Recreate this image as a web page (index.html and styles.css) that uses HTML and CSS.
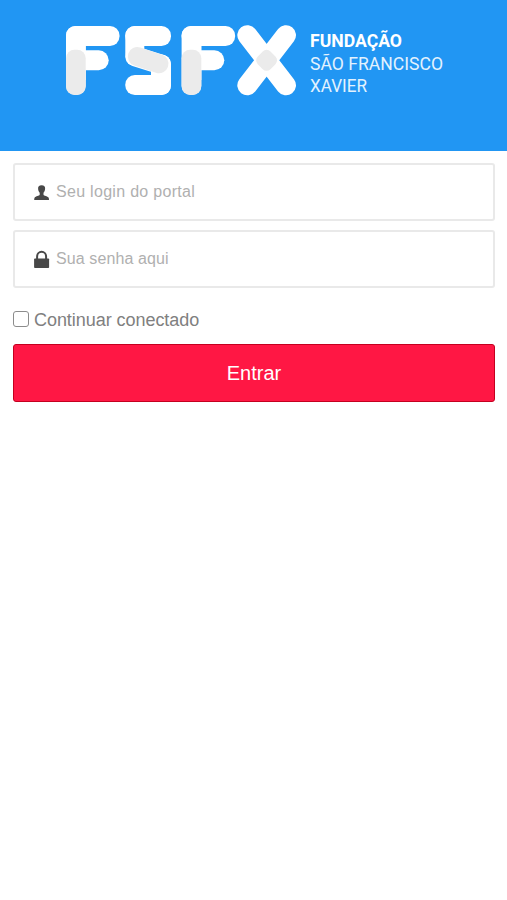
FILE: index.html
```
<!DOCTYPE html>
<html lang="pt-BR">
<head>
    <meta charset="UTF-8">
    <meta name="viewport" content="width=device-width, initial-scale=1.0">
    <title>Portal FSFX</title>
    <link rel="stylesheet" href="styles.css">
</head>
<body>
    <header class="header">
        <svg class="logo" width="380" height="72" viewBox="65 24 380 72" role="img" aria-label="FSFX">
            <!-- F -->
            <g id="logo-f">
                <rect class="bar" x="66" y="26" width="53.5" height="20" rx="9.5"/>
                <rect class="bar" x="66" y="26" width="19.7" height="69" rx="9.5"/>
                <rect class="bar" x="70" y="50.3" width="38.7" height="20" rx="10"/>
                <rect class="bar" x="78" y="40" width="7.700" height="40"/>
                <rect class="overlap" x="66" y="49.7" width="19.700" height="45.300" rx="8.500"/>
            </g>
            <!-- S -->
            <rect class="bar" x="125.300" y="26" width="45.700" height="20" rx="9.500"/>
            <rect class="bar" x="125.300" y="26" width="19" height="40" rx="9.500"/>
            <rect class="bar" x="151" y="54.500" width="20" height="40.500" rx="9.500"/>
            <rect class="bar" x="125.300" y="75" width="45.700" height="20" rx="9.500"/>
            <line class="diagonal" x1="135.500" y1="56.500" x2="161" y2="64.500"/>
            <line class="diagonal-gray" x1="137.300" y1="56.500" x2="159" y2="63.800"/>
            <!-- F -->
            <use href="#logo-f" x="115.600"/>
            <!-- X -->
            <line class="diagonal" x1="247.300" y1="35.200" x2="286" y2="85.300"/>
            <line class="diagonal" x1="286" y1="35.200" x2="247.300" y2="85.300"/>
            <rect class="overlap" x="-9" y="-9" width="18" height="18" rx="5.500" transform="translate(266.600 60.300) rotate(45)"/>
            <text class="name bold" x="310" y="47.300" textLength="92" lengthAdjust="spacingAndGlyphs">FUNDAÇÃO</text>
            <text class="name" x="310" y="69.600" textLength="133" lengthAdjust="spacingAndGlyphs">SÃO FRANCISCO</text>
            <text class="name" x="310" y="92" textLength="57" lengthAdjust="spacingAndGlyphs">XAVIER</text>
        </svg>
    </header>

    <form class="login">
        <div class="field">
            <svg class="icon" width="16" height="18" viewBox="0 0 16 18">
                <path d="M7.600 2.200C5 2.200 3.900 3.600 4.100 5.800c.1 1.800.7 3.100 1.600 4v2c-.5 1.100-3.900 1.300-5 2.800-.4.600-.5 1.500-.5 2.400h14.800c0-.9-.1-1.800-.5-2.400-1.100-1.500-4.500-1.700-5-2.800v-2c.9-.9 1.500-2.200 1.600-4 .2-2.200-.9-3.600-3.500-3.600z"/>
            </svg>
            <input class="user" type="text" id="login" placeholder="Seu login do portal">
        </div>
        <div class="field">
            <svg class="icon" width="16" height="18" viewBox="0 0 16 18">
                <path class="shackle" d="M3.100 9.500V6.700a4.500 4.900 0 0 1 9 0v2.800"/>
                <rect x=".1" y="8.400" width="15" height="9.600" rx=".8"/>
            </svg>
            <input type="password" id="senha" placeholder="Sua senha aqui">
        </div>
        <label class="remember">
            <input type="checkbox" id="conectado">
            <span>Continuar conectado</span>
        </label>
        <button type="submit" class="btn">Entrar</button>
    </form>
</body>
</html>
```
FILE: styles.css
```
* {
    box-sizing: border-box;
}

body {
    font-family: "Liberation Sans", Arial, sans-serif;
    background-color: #fff;
    margin: 0;
}

.header {
    height: 151px;
    padding: 24px 0 0 65px;
    background-color: #2196f3;
}

.logo {
    display: block;
}

.bar {
    fill: #fff;
}

.overlap {
    fill: #ebebeb;
}

.diagonal,
.diagonal-gray {
    stroke: #fff;
    stroke-width: 20px;
    stroke-linecap: round;
}

.diagonal-gray {
    stroke: #ebebeb;
    stroke-width: 19px;
}

.name {
    font-family: Roboto, sans-serif;
    font-size: 18px;
    fill: #e3f2fe;
}

.name.bold {
    font-weight: bold;
    fill: #fff;
}

.login {
    padding: 12px 12px 0 13px;
}

.field {
    display: flex;
    align-items: center;
    height: 58px;
    margin-bottom: 9px;
    padding-left: 19px;
    border: 2px solid #e9e9e9;
    border-radius: 3px;
}

.icon {
    margin-right: 6px;
    fill: #484848;
}

.shackle {
    fill: none;
    stroke: #484848;
    stroke-width: 2px;
}

.field input {
    flex: 1;
    padding: 0;
    border: none;
    outline: none;
    font-family: inherit;
    font-size: 16px;
    letter-spacing: 0.1px;
    background: none;
}

.field .user {
    letter-spacing: 0.3px;
}

.field input::placeholder {
    color: #b0b0b0;
}

.remember {
    display: flex;
    align-items: center;
    height: 20px;
    margin: 22px 0 14px;
    font-size: 18px;
    letter-spacing: -0.05px;
    color: #808080;
}

.remember input {
    appearance: none;
    width: 16px;
    height: 16px;
    margin: 0 5px 2px 0;
    border: 1px solid #8c8c8c;
    border-radius: 3px;
}

.btn {
    display: block;
    width: 100%;
    height: 58px;
    border: 1px solid #c4001f;
    border-radius: 3px;
    background-color: #ff1744;
    color: #fff;
    font-family: inherit;
    font-size: 20px;
    cursor: pointer;
}
```
